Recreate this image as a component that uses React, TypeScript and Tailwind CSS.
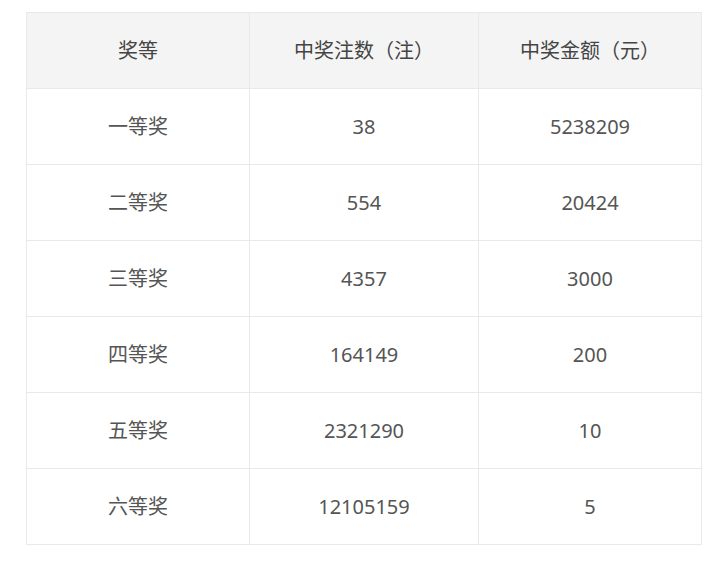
import React from "react";

const rows = [
  { level: "一等奖", count: "38", amount: "5238209" },
  { level: "二等奖", count: "554", amount: "20424" },
  { level: "三等奖", count: "4357", amount: "3000" },
  { level: "四等奖", count: "164149", amount: "200" },
  { level: "五等奖", count: "2321290", amount: "10" },
  { level: "六等奖", count: "12105159", amount: "5" },
];

export default function App() {
  return (
    <div className="min-h-[564px] w-[726px] bg-white pt-3 pl-[26px] font-['Noto_Sans','Noto_Sans_CJK_SC',sans-serif]">
      <table className="w-[675px] table-fixed border-collapse text-center text-[20px]">
        <colgroup>
          <col className="w-[223px]" />
          <col className="w-[229px]" />
          <col className="w-[223px]" />
        </colgroup>
        <thead>
          <tr className="h-[76px] bg-[#f4f4f4] text-[#444]">
            <th className="border border-[#e9e9e9] font-normal">奖等</th>
            <th className="border border-[#e9e9e9] font-normal">中奖注数（注）</th>
            <th className="border border-[#e9e9e9] font-normal">中奖金额（元）</th>
          </tr>
        </thead>
        <tbody className="text-[#555]">
          {rows.map((row) => (
            <tr key={row.level} className="h-[76px]">
              <td className="border border-[#e9e9e9]">{row.level}</td>
              <td className="border border-[#e9e9e9]">{row.count}</td>
              <td className="border border-[#e9e9e9]">{row.amount}</td>
            </tr>
          ))}
        </tbody>
      </table>
    </div>
  );
}
